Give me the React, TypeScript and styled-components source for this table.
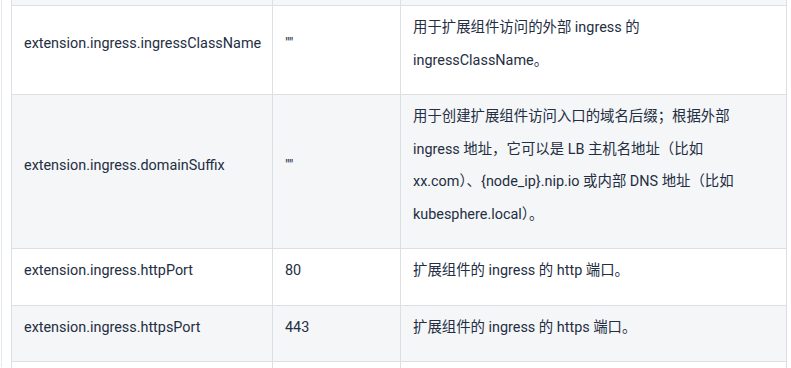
import React from "react";
import styled, { createGlobalStyle } from "styled-components";

const GlobalStyle = createGlobalStyle`
    html, body {
        margin: 0;
        padding: 0;
        background: #ffffff;
    }
    body {
        font-family: Roboto, "Noto Sans CJK SC", sans-serif;
        color: #242e42;
        overflow: hidden;
    }
`;

const Page = styled.div`
    padding-left: 1px;
    height: 368px;
    overflow: hidden;
`;

const Frame = styled.div`
    border-left: 1px solid #e6e8eb;
    padding-left: 9px;
    padding-right: 5px;
    height: 100%;
`;

const Table = styled.table`
    width: 775px;
    border-collapse: collapse;
    table-layout: fixed;
    margin-top: -1px;
    font-size: 14.4px;
`;

const Row = styled.tr<{ $striped?: boolean }>`
    background: ${(p) => (p.$striped ? "#f5f6f8" : "#ffffff")};
`;

const Cell = styled.td<{ $wide?: boolean }>`
    border: 1px solid #dcdfe4;
    padding: 6px ${(p) => (p.$wide ? "40px" : "12px")} 17px 12px;
    line-height: 32.5px;
    vertical-align: middle;
    word-break: normal;
`;

const StubCell = styled.td`
    border: 1px solid #dcdfe4;
    height: 5px;
    padding: 0;
`;

type Param = {
    name: string;
    value: string;
    description: string;
};

const params: Param[] = [
    {
        name: "extension.ingress.ingressClassName",
        value: '""',
        description: "用于扩展组件访问的外部 ingress 的 ingressClassName。",
    },
    {
        name: "extension.ingress.domainSuffix",
        value: '""',
        description:
            "用于创建扩展组件访问入口的域名后缀；根据外部 ingress 地址，它可以是 LB 主机名地址（比如 xx.com）、{node_ip}.nip.io 或内部 DNS 地址（比如 kubesphere.local）。",
    },
    {
        name: "extension.ingress.httpPort",
        value: "80",
        description: "扩展组件的 ingress 的 http 端口。",
    },
    {
        name: "extension.ingress.httpsPort",
        value: "443",
        description: "扩展组件的 ingress 的 https 端口。",
    },
];

export default function App() {
    return (
        <Page>
            <GlobalStyle />
            <Frame>
                <Table>
                    <colgroup>
                        <col style={{ width: 261 }} />
                        <col style={{ width: 128 }} />
                        <col style={{ width: 386 }} />
                    </colgroup>
                    <tbody>
                        <Row $striped>
                            <StubCell />
                            <StubCell />
                            <StubCell />
                        </Row>
                        {params.map((param, index) => (
                            <Row key={param.name} $striped={index % 2 === 1}>
                                <Cell>{param.name}</Cell>
                                <Cell>{param.value}</Cell>
                                <Cell $wide>{param.description}</Cell>
                            </Row>
                        ))}
                        <Row>
                            <Cell>&nbsp;</Cell>
                            <Cell>&nbsp;</Cell>
                            <Cell $wide>&nbsp;</Cell>
                        </Row>
                    </tbody>
                </Table>
            </Frame>
        </Page>
    );
}
